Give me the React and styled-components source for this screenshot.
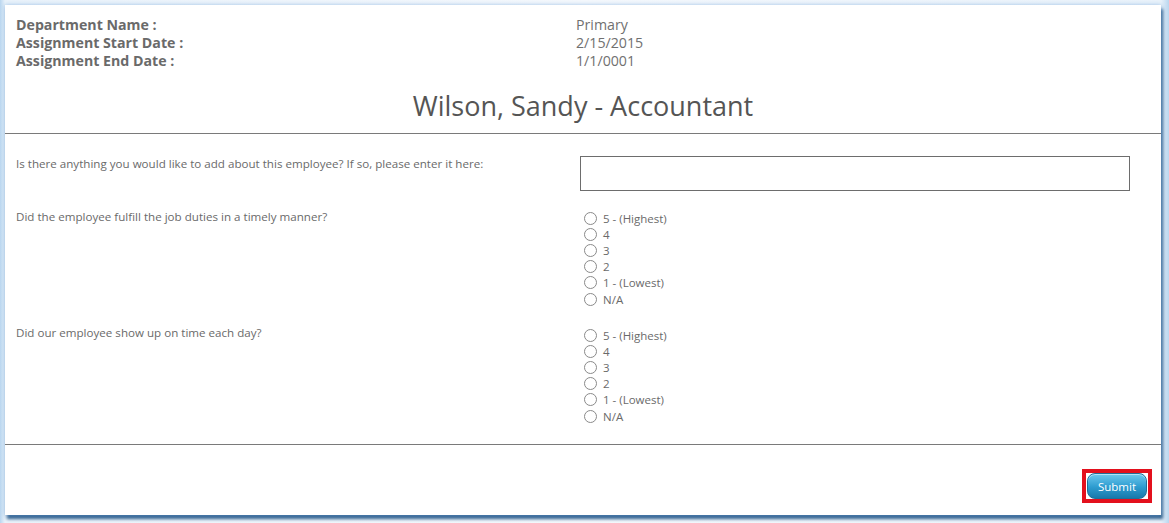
import React from "react";
import styled, { createGlobalStyle } from "styled-components";

const GlobalStyle = createGlobalStyle`
  html, body {
    margin: 0;
    padding: 0;
    background: #eaf2f9;
    font-family: "Open Sans", "Noto Sans", sans-serif;
    color: #666;
  }
  * { box-sizing: border-box; }
`;

const Page = styled.div`
  width: 1169px;
  height: 523px;
  padding: 5px 8px 8px 5px;
  background: linear-gradient(90deg, #b9d6ef 0, #e9f2fa 5px, #f4f8fc 50%, #e9f2fa calc(100% - 8px), #b9d6ef 100%);
`;

const Panel = styled.div`
  width: 1156px;
  height: 510px;
  background: #fff;
  box-shadow: 0 0 4px rgba(120, 170, 220, 0.7), 2px 4px 3px #2f5f8c;
  display: flex;
  flex-direction: column;
`;

const Header = styled.div`
  padding: 11px 11px 0 11px;
`;

const InfoGrid = styled.div`
  display: grid;
  grid-template-columns: 560px 1fr;
  font-size: 14.2px;
  line-height: 18px;
`;

const InfoLabel = styled.div`
  font-weight: 700;
  color: #6a6a6a;
`;

const InfoValue = styled.div`
  color: #707070;
`;

const Title = styled.h1`
  margin: 0;
  padding: 18px 0 9px;
  text-align: center;
  font-size: 27px;
  font-weight: 400;
  line-height: 36px;
  color: #555;
`;

const Rule = styled.hr`
  margin: 0;
  border: 0;
  border-top: 1px solid #7a7a7a;
`;

const Questions = styled.div`
  padding: 22px 31px 20px 11px;
  display: flex;
  flex-direction: column;
  gap: 18px;
`;

const QuestionRow = styled.div`
  display: grid;
  grid-template-columns: 564px 1fr;
  align-items: start;
`;

const QuestionText = styled.div`
  font-size: 11.6px;
  line-height: 16px;
  color: #6a6a6a;
`;

const TextBox = styled.input`
  width: 550px;
  height: 35px;
  border: 1px solid #6d6d6d;
  outline: none;
  font-family: inherit;
`;

const RadioList = styled.div`
  display: flex;
  flex-direction: column;
  padding-left: 4px;
  padding-top: ${(p) => p.$offset || 0}px;
`;

const RadioLabel = styled.label`
  display: flex;
  align-items: center;
  gap: 6px;
  height: 16.2px;
  font-size: 11.5px;
  color: #6a6a6a;
`;

const Radio = styled.input`
  appearance: none;
  margin: 0;
  width: 13px;
  height: 13px;
  border: 1px solid #8a8a8a;
  border-radius: 50%;
  background: #fff;
`;

const Footer = styled.div`
  flex: 1;
  display: flex;
  justify-content: flex-end;
  align-items: flex-start;
  padding: 24px 9px 0 0;
`;

const Highlight = styled.div`
  border: 4px solid #e3101d;
  padding: 0 1px 0 1px;
`;

const SubmitButton = styled.button`
  width: 60px;
  height: 26px;
  border: 1px solid #1f6f9a;
  border-radius: 8px;
  background: linear-gradient(#6cc8ee, #2d9bcf 55%, #1879ab);
  box-shadow: inset 0 1px 0 rgba(255, 255, 255, 0.5);
  color: #fff;
  font-family: "Open Sans", "Noto Sans", sans-serif;
  font-size: 11.5px;
  padding: 0;
`;

const options = ["5 - (Highest)", "4", "3", "2", "1 - (Lowest)", "N/A"];

function RatingQuestion({ name, text, offset }) {
  return (
    <QuestionRow>
      <QuestionText>{text}</QuestionText>
      <RadioList $offset={offset}>
        {options.map((o) => (
          <RadioLabel key={o}>
            <Radio type="radio" name={name} />
            {o}
          </RadioLabel>
        ))}
      </RadioList>
    </QuestionRow>
  );
}

export default function App() {
  return (
    <>
      <GlobalStyle />
      <Page>
        <Panel>
          <Header>
            <InfoGrid>
              <InfoLabel>Department Name :</InfoLabel>
              <InfoValue>Primary</InfoValue>
              <InfoLabel>Assignment Start Date :</InfoLabel>
              <InfoValue>2/15/2015</InfoValue>
              <InfoLabel>Assignment End Date :</InfoLabel>
              <InfoValue>1/1/0001</InfoValue>
            </InfoGrid>
            <Title>Wilson, Sandy - Accountant</Title>
          </Header>
          <Rule />
          <Questions>
            <QuestionRow>
              <QuestionText>
                Is there anything you would like to add about this employee? If so, please enter it here:
              </QuestionText>
              <TextBox type="text" />
            </QuestionRow>
            <RatingQuestion
              name="q1"
              offset={1}
              text="Did the employee fulfill the job duties in a timely manner?"
            />
            <RatingQuestion name="q2" offset={2} text="Did our employee show up on time each day?" />
          </Questions>
          <Rule />
          <Footer>
            <Highlight>
              <SubmitButton>Submit</SubmitButton>
            </Highlight>
          </Footer>
        </Panel>
      </Page>
    </>
  );
}
